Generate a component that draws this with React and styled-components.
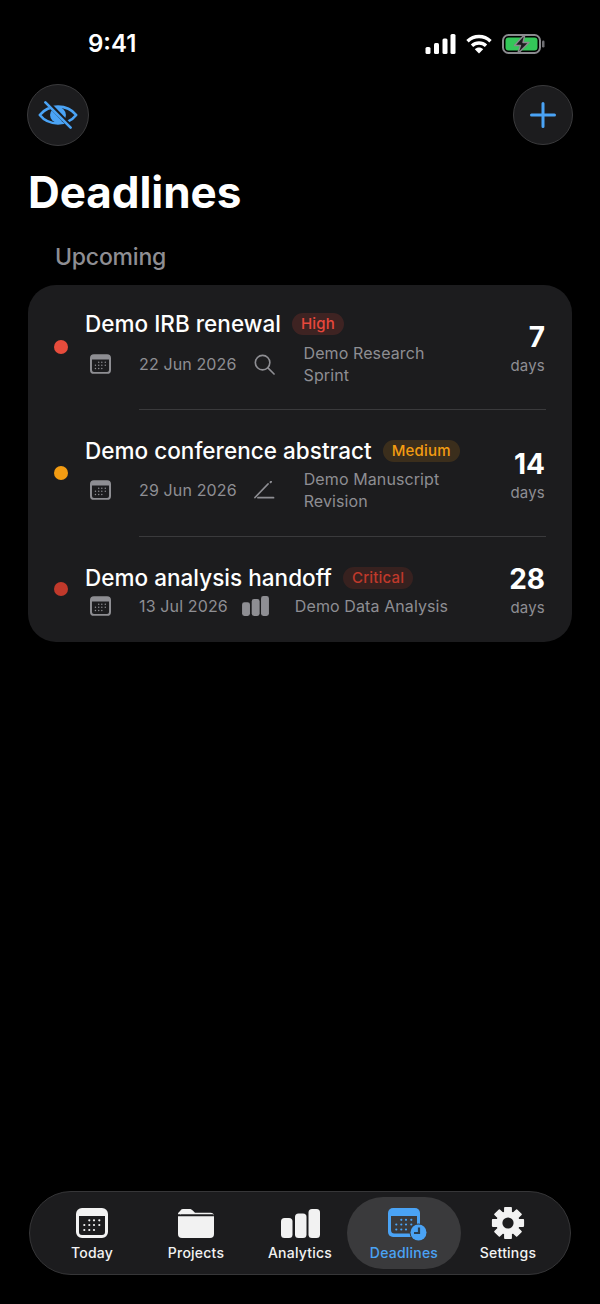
import React from "react";
import styled, { createGlobalStyle } from "styled-components";

const Global = createGlobalStyle`
  html, body { margin: 0; padding: 0; background: #000; }
  * { box-sizing: border-box; }
`;

const Page = styled.div`
  width: 600px;
  height: 1304px;
  background: #000;
  color: #fff;
  font-family: Inter, "Liberation Sans", sans-serif;
  display: flex;
  flex-direction: column;
  overflow: hidden;
`;

const StatusBar = styled.div`
  height: 84px;
  padding: 27px 55px 0 88px;
  display: flex;
  justify-content: space-between;
  align-items: flex-start;
`;
const Clock = styled.div`
  font-size: 24px;
  line-height: 34px;
  font-weight: 600;
`;
const StatusIcons = styled.div`
  display: flex;
  align-items: center;
  gap: 10px;
  height: 34px;
`;

const Header = styled.div`
  display: flex;
  justify-content: space-between;
  align-items: center;
  padding: 0 27px;
`;
const RoundButton = styled.button`
  width: ${(p) => p.$size}px;
  height: ${(p) => p.$size}px;
  padding: 0;
  border-radius: 50%;
  background: #1c1c1e;
  border: 1px solid #3a3a3c;
  color: #4aa3f5;
  display: flex;
  align-items: center;
  justify-content: center;
`;

const Title = styled.h1`
  margin: 17px 0 0 28px;
  font-size: 44px;
  line-height: 58px;
  font-weight: 700;
  letter-spacing: -0.05px;
`;
const Section = styled.div`
  margin: 21px 0 0 55px;
  font-size: 23px;
  line-height: 30px;
  font-weight: 500;
  letter-spacing: -0.2px;
  color: #8e8e93;
`;

const Card = styled.div`
  margin: 13px 28px 0;
  background: #1c1c1e;
  border-radius: 28px;
  padding: 0 26px;
`;
const Row = styled.div`
  display: flex;
  align-items: center;
  padding: ${(p) => p.$top}px 0 ${(p) => p.$bottom}px;
`;
const Dot = styled.span`
  width: 14px;
  height: 14px;
  border-radius: 50%;
  background: ${(p) => p.$color};
  flex: none;
  margin: 0 17px 4px 0;
`;
const Main = styled.div`
  flex: 1;
  min-width: 0;
`;
const TitleRow = styled.div`
  display: flex;
  align-items: center;
  gap: 11px;
  height: 26px;
`;
const ItemTitle = styled.div`
  font-size: 22.5px;
  line-height: 26px;
  font-weight: 500;
  letter-spacing: 0.03px;
  white-space: nowrap;
`;
const Badge = styled.span`
  height: 22px;
  padding: 0 9px;
  border-radius: 11px;
  font-size: 15px;
  line-height: 22px;
  font-weight: 500;
  letter-spacing: 0.2px;
  color: ${(p) => p.$color};
  background: ${(p) => p.$bg};
`;
const Meta = styled.div`
  display: flex;
  align-items: center;
  margin-top: ${(p) => p.$gap}px;
  color: #8e8e93;
`;
const IconBox = styled.span`
  width: 28px;
  height: 22px;
  flex: none;
  display: flex;
  align-items: center;
  justify-content: center;
`;
const CalendarBox = styled(IconBox)`
  margin-left: 1px;
`;
const DateText = styled.span`
  margin: 0 14px 0 25px;
  font-size: 16px;
  line-height: 22px;
  letter-spacing: 0.13px;
  white-space: nowrap;
`;
const ProjectName = styled.span`
  margin-left: 25px;
  max-width: 160px;
  font-size: 16px;
  line-height: 22px;
  letter-spacing: 0.1px;
`;
const Days = styled.div`
  flex: none;
  text-align: right;
  margin-right: 1px;
`;
const DayNumber = styled.div`
  font-size: 28px;
  line-height: 34px;
  font-weight: 700;
`;
const DayLabel = styled.div`
  font-size: 15px;
  line-height: 22px;
  margin-top: 1px;
  color: #8e8e93;
  letter-spacing: 0.2px;
`;
const Divider = styled.div`
  height: 1px;
  margin-left: 85px;
  background: #3a3a3c;
`;

const TabBar = styled.nav`
  margin: auto 29px 29px;
  height: 84px;
  padding: 5px 10px;
  border-radius: 42px;
  background: #1c1c1e;
  border: 1px solid #363638;
  display: grid;
  grid-template-columns: repeat(5, 1fr);
`;
const Tab = styled.div`
  display: flex;
  flex-direction: column;
  align-items: center;
  justify-content: flex-end;
  padding-bottom: 8px;
  gap: 7px;
  height: 72px;
  margin: ${(p) => (p.$active ? "0 -5px" : "0")};
  border-radius: 36px;
  background: ${(p) => (p.$active ? "#3a3a3c" : "transparent")};
  color: ${(p) => (p.$active ? "#4aa3f5" : "#f2f2f2")};
`;
const TabIcon = styled.span`
  height: 35px;
  display: flex;
  align-items: flex-end;
  justify-content: center;
  margin-bottom: ${(p) => -p.$drop}px;
`;
const TabLabel = styled.span`
  font-size: 14px;
  line-height: 16px;
  font-weight: 450;
  letter-spacing: 0.22px;
  white-space: nowrap;
`;

const Signal = () => (
  <svg width="31" height="20" viewBox="0 0 31 20" fill="#fff">
    <rect x="0.5" y="13" width="5" height="7" rx="1.5" />
    <rect x="9" y="9" width="5" height="11" rx="1.5" />
    <rect x="17.5" y="4.5" width="5" height="15.5" rx="1.5" />
    <rect x="25.5" y="0" width="5" height="20" rx="1.5" />
  </svg>
);
const Wifi = () => (
  <svg width="26" height="20" viewBox="0 0 26 20" fill="none" stroke="#fff" strokeWidth="3.4">
    <path d="M1.5 7.2C8 1 18 1 24.5 7.2" />
    <path d="M6 11.8C10 8 16 8 20 11.8" />
    <path d="M13 19.5L8.8 15.2C11 13 15 13 17.2 15.2Z" fill="#fff" stroke="none" />
  </svg>
);
const Battery = () => (
  <svg width="43" height="20" viewBox="0 0 43 20">
    <rect x="1" y="1" width="37" height="18" rx="5.5" fill="none" stroke="#8a8a8e" strokeWidth="2" />
    <rect x="3.5" y="3.5" width="32" height="13" rx="3" fill="#34c759" />
    <rect x="40" y="6.5" width="2.5" height="7" rx="1.2" fill="#6e6e72" />
    <path d="M23 0L12.5 11.5H18.5L15.5 20L27 8.5H21Z" fill="#1c1c1e" stroke="#8a8a8e" strokeWidth="1.4" strokeLinejoin="round" />
  </svg>
);
const EyeOff = () => (
  <svg width="40" height="28" viewBox="0 0 42 30" fill="none" stroke="currentColor">
    <path d="M1.5 15C11 3 31 3 40.5 15C31 27 11 27 1.5 15Z" strokeWidth="2.8" strokeLinejoin="round" />
    <circle cx="21" cy="15" r="8.5" fill="currentColor" stroke="none" />
    <path d="M9.5 1.5L35.5 28.5" stroke="#1c1c1e" strokeWidth="5" />
    <path d="M7.5 1.5L34.5 28.5" strokeWidth="2.8" strokeLinecap="round" />
  </svg>
);
const Plus = () => (
  <svg width="26" height="26" viewBox="0 0 26 26" stroke="currentColor" strokeWidth="3" strokeLinecap="round">
    <path d="M13 1.5V24.5M1.5 13H24.5" />
  </svg>
);

const calDots = [
  [13.3, 12.3], [18, 12.3], [23.3, 12.3],
  [8.3, 17], [13.3, 17], [18, 17], [23.3, 17],
  [8.3, 22], [13.3, 22], [18, 22],
];
const CalendarIcon = ({ width = 32, height = 30 }) => (
  <svg width={width} height={height} viewBox="0 0 32 30" fill="currentColor">
    <path fillRule="evenodd" d="M6 0H26A6 6 0 0 1 32 6V24A6 6 0 0 1 26 30H6A6 6 0 0 1 0 24V6A6 6 0 0 1 6 0ZM3 8V24A3 3 0 0 0 6 27H26A3 3 0 0 0 29 24V8Z" />
    {calDots.map(([x, y]) => (
      <circle key={`${x}-${y}`} cx={x} cy={y} r="1.1" />
    ))}
  </svg>
);
const Folder = () => (
  <svg width="36" height="29" viewBox="0 0 36 29" fill="currentColor">
    <path d="M2 3.5C2 1.5 3 0 5 0H11.5C13 0 13.8.6 15 1.8L17 3.8H32.5A3.5 3.5 0 0 1 36 7V5.2H2Z" />
    <path d="M0 7.2H36V25A4 4 0 0 1 32 29H4A4 4 0 0 1 0 25Z" />
    <path d="M0 7.2V4.5A3.5 3.5 0 0 1 3 2V5.2H0Z" />
  </svg>
);
const Bars = ({ width = 39, height = 29 }) => (
  <svg width={width} height={height} viewBox="0 0 39 29" fill="currentColor">
    <rect x="0" y="9" width="11.5" height="20" rx="3.5" />
    <rect x="14" y="4.5" width="11.5" height="24.5" rx="3.5" />
    <rect x="27.5" y="0" width="11.5" height="29" rx="3.5" />
  </svg>
);
const DeadlineIcon = () => (
  <svg width="48" height="33" viewBox="-8 0 48 33" fill="currentColor">
    <rect width="32" height="29" y="0" rx="5" />
    <path d="M3 8H29V22A3.5 3.5 0 0 1 25.5 25.5H6.5A3.5 3.5 0 0 1 3 22Z" fill="#3a3a3c" />
    {calDots.map(([x, y]) => (
      <circle key={`${x}-${y}`} cx={x} cy={y - 0.5} r="1.1" />
    ))}
    <circle cx="30.5" cy="24.5" r="9" fill="#3a3a3c" />
    <circle cx="30.5" cy="24.5" r="8" />
    <path d="M31 19.5V25H26" fill="none" stroke="#2a3f52" strokeWidth="2.2" />
  </svg>
);

const gearPath = (() => {
  const cx = 17, cy = 17, outer = 15.6, inner = 11, n = 8;
  const pts = [];
  for (let i = 0; i < n; i++) {
    const a = (i * 2 * Math.PI) / n - Math.PI / 2;
    const spread = 0.2, base = 0.29;
    [[inner, -base], [outer, -spread], [outer, spread], [inner, base]].forEach(([r, d]) => {
      pts.push(`${(cx + r * Math.cos(a + d)).toFixed(2)} ${(cy + r * Math.sin(a + d)).toFixed(2)}`);
    });
  }
  return `M${pts.join("L")}Z`;
})();
const Gear = () => (
  <svg width="34" height="34" viewBox="0 0 34 34">
    <path d={gearPath} fill="currentColor" stroke="currentColor" strokeWidth="1.6" strokeLinejoin="round" />
    <circle cx="17" cy="17" r="5.6" fill="#1c1c1e" />
  </svg>
);

const SearchIcon = () => (
  <svg width="21" height="21" viewBox="0 0 22 22" fill="none" stroke="currentColor" strokeWidth="1.7" strokeLinecap="round">
    <circle cx="9" cy="9" r="7.6" />
    <path d="M14.6 14.6L21 21" />
  </svg>
);
const PenIcon = () => (
  <svg width="22" height="18" viewBox="0 0 22 18" fill="none" stroke="currentColor" strokeWidth="1.8" strokeLinecap="round">
    <path d="M1 16.5L14 3" />
    <path d="M16.6 1.2L17 .8" strokeWidth="2" />
    <path d="M4 16.7H19.5" />
  </svg>
);

const items = [
  {
    title: "Demo IRB renewal", badge: "High", color: "#e8483c", bg: "rgba(232,72,60,0.17)", dot: "#e74c3c",
    date: "22 Jun 2026", icon: <SearchIcon />, project: "Demo Research Sprint", days: 7, top: 26, bottom: 23, gap: 5,
  },
  {
    title: "Demo conference abstract", badge: "Medium", color: "#f39c12", bg: "rgba(243,156,18,0.15)", dot: "#f39c12",
    date: "29 Jun 2026", icon: <PenIcon />, project: "Demo Manuscript Revision", days: 14, top: 28, bottom: 24, gap: 4,
  },
  {
    title: "Demo analysis handoff", badge: "Critical", color: "#c0392b", bg: "rgba(192,57,43,0.17)", dot: "#c0392b",
    date: "13 Jul 2026", icon: <Bars width={27} height={20} />, project: "Demo Data Analysis", days: 28, top: 25, bottom: 23, gap: 4,
  },
];

const tabs = [
  { label: "Today", icon: <CalendarIcon />, drop: 0 },
  { label: "Projects", icon: <Folder />, drop: 0 },
  { label: "Analytics", icon: <Bars />, drop: 0 },
  { label: "Deadlines", icon: <DeadlineIcon />, drop: 3, active: true },
  { label: "Settings", icon: <Gear />, drop: 2 },
];

export default function App() {
  return (
    <Page>
      <Global />
      <StatusBar>
        <Clock>9:41</Clock>
        <StatusIcons>
          <Signal />
          <Wifi />
          <Battery />
        </StatusIcons>
      </StatusBar>
      <Header>
        <RoundButton $size={62}><EyeOff /></RoundButton>
        <RoundButton $size={60}><Plus /></RoundButton>
      </Header>
      <Title>Deadlines</Title>
      <Section>Upcoming</Section>
      <Card>
        {items.map((it, i) => (
          <React.Fragment key={it.title}>
            {i > 0 && <Divider />}
            <Row $top={it.top} $bottom={it.bottom}>
              <Dot $color={it.dot} />
              <Main>
                <TitleRow>
                  <ItemTitle>{it.title}</ItemTitle>
                  <Badge $color={it.color} $bg={it.bg}>{it.badge}</Badge>
                </TitleRow>
                <Meta $gap={it.gap}>
                  <CalendarBox><CalendarIcon width={21} height={20} /></CalendarBox>
                  <DateText>{it.date}</DateText>
                  <IconBox>{it.icon}</IconBox>
                  <ProjectName>{it.project}</ProjectName>
                </Meta>
              </Main>
              <Days>
                <DayNumber>{it.days}</DayNumber>
                <DayLabel>days</DayLabel>
              </Days>
            </Row>
          </React.Fragment>
        ))}
      </Card>
      <TabBar>
        {tabs.map((t) => (
          <Tab key={t.label} $active={t.active}>
            <TabIcon $drop={t.drop}>{t.icon}</TabIcon>
            <TabLabel>{t.label}</TabLabel>
          </Tab>
        ))}
      </TabBar>
    </Page>
  );
}
